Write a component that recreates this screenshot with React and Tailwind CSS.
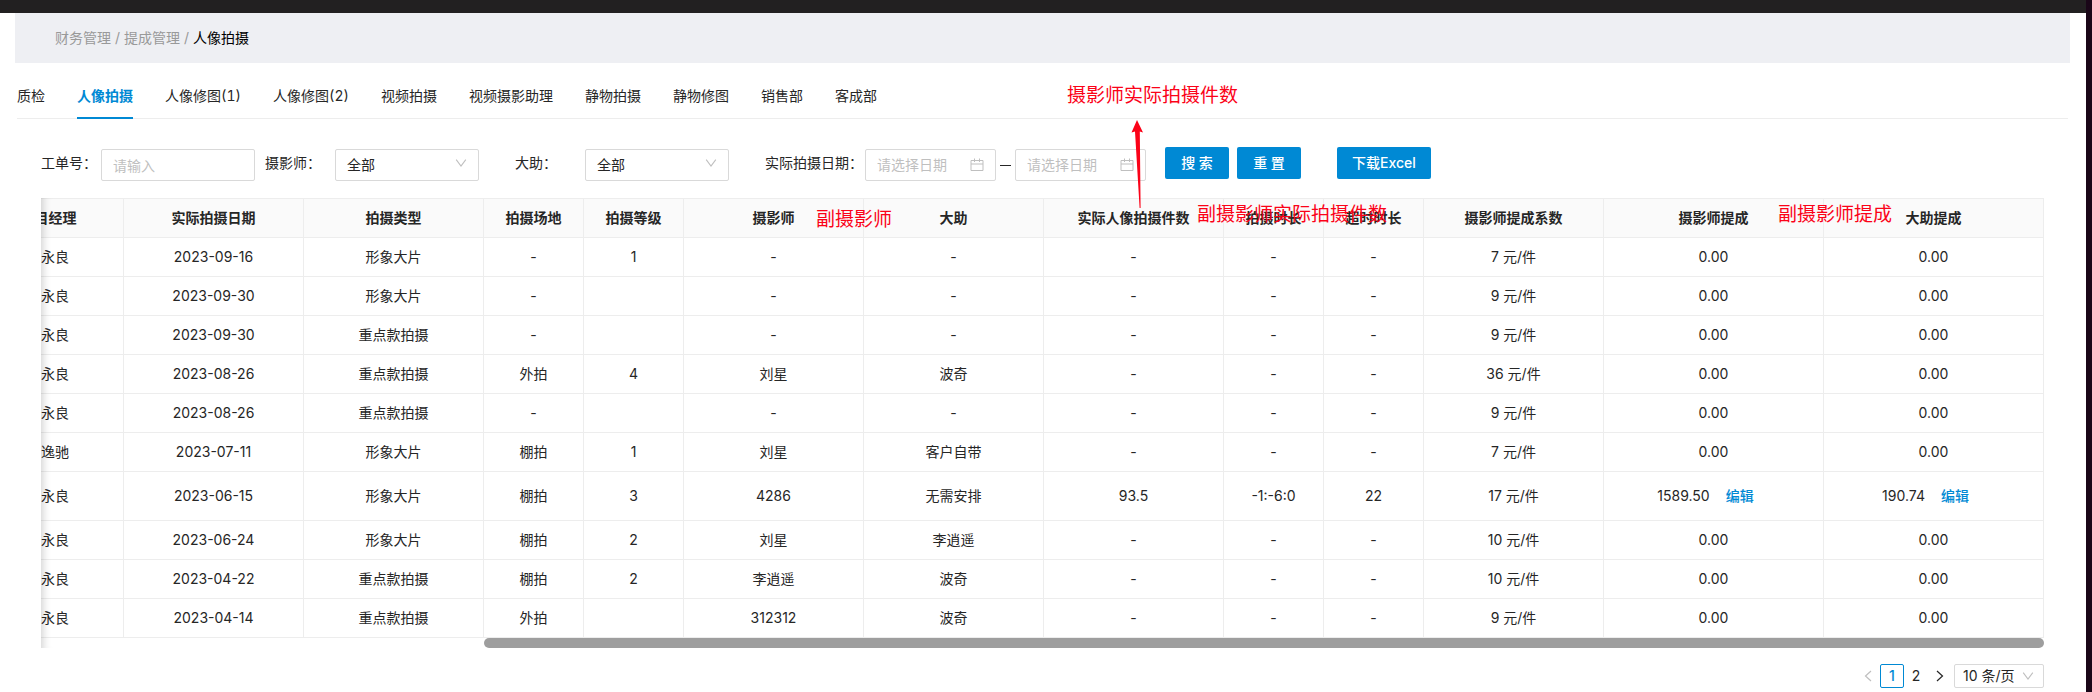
import React from 'react';

const tabs = ['质检', '人像拍摄', '人像修图(1)', '人像修图(2)', '视频拍摄', '视频摄影助理', '静物拍摄', '静物修图', '销售部', '客成部'];

const columns = [
  ['项目经理', 150], ['实际拍摄日期', 180], ['拍摄类型', 180], ['拍摄场地', 100], ['拍摄等级', 100],
  ['摄影师', 180], ['大助', 180], ['实际人像拍摄件数', 180], ['拍摄时长', 100], ['超时时长', 100],
  ['摄影师提成系数', 180], ['摄影师提成', 220], ['大助提成', 220],
];

const rows = [
  ['永良', '2023-09-16', '形象大片', '-', '1', '-', '-', '-', '-', '-', '7 元/件', '0.00', '0.00'],
  ['永良', '2023-09-30', '形象大片', '-', '', '-', '-', '-', '-', '-', '9 元/件', '0.00', '0.00'],
  ['永良', '2023-09-30', '重点款拍摄', '-', '', '-', '-', '-', '-', '-', '9 元/件', '0.00', '0.00'],
  ['永良', '2023-08-26', '重点款拍摄', '外拍', '4', '刘星', '波奇', '-', '-', '-', '36 元/件', '0.00', '0.00'],
  ['永良', '2023-08-26', '重点款拍摄', '-', '', '-', '-', '-', '-', '-', '9 元/件', '0.00', '0.00'],
  ['逸驰', '2023-07-11', '形象大片', '棚拍', '1', '刘星', '客户自带', '-', '-', '-', '7 元/件', '0.00', '0.00'],
  ['永良', '2023-06-15', '形象大片', '棚拍', '3', '4286', '无需安排', '93.5', '-1:-6:0', '22', '17 元/件', '1589.50', '190.74'],
  ['永良', '2023-06-24', '形象大片', '棚拍', '2', '刘星', '李逍遥', '-', '-', '-', '10 元/件', '0.00', '0.00'],
  ['永良', '2023-04-22', '重点款拍摄', '棚拍', '2', '李逍遥', '波奇', '-', '-', '-', '10 元/件', '0.00', '0.00'],
  ['永良', '2023-04-14', '重点款拍摄', '外拍', '', '312312', '波奇', '-', '-', '-', '9 元/件', '0.00', '0.00'],
];

function Chevron({ className }) {
  return (
    <svg viewBox="0 0 12 8" className={className} fill="none" stroke="#bfbfbf" strokeWidth="1.1" aria-hidden="true">
      <path d="M1.2 0.6 6 7 10.8 0.6" />
    </svg>
  );
}

function CalendarIcon() {
  return (
    <svg viewBox="0 0 14 14" className="size-3.5 shrink-0" fill="none" stroke="#bfbfbf" aria-hidden="true">
      <path d="M1 2.5h12v10H1zM1 6h12M4.5 0.5v3.5M9.5 0.5v3.5" />
    </svg>
  );
}

function SelectField({ id, label }) {
  return (
    <div className="flex items-start">
      <label htmlFor={id} className="w-[70px] leading-8">{label}</label>
      <div className="relative mt-0.5">
        <select id={id} className="h-8 w-36 appearance-none rounded-xs border border-[#d9d9d9] bg-white pl-[11px] pr-8">
          <option>全部</option>
        </select>
        <Chevron className="pointer-events-none absolute right-3 top-2.5 h-2 w-3" />
      </div>
    </div>
  );
}

function DateBox({ id, label }) {
  return (
    <div className="mt-0.5 flex h-8 w-[131px] items-center rounded-xs border border-[#d9d9d9] pl-[11px] pr-[11px]">
      <input id={id} aria-label={label} placeholder="请选择日期" className="w-0 min-w-0 flex-1 outline-none placeholder:text-[#bfbfbf]" />
      <CalendarIcon />
    </div>
  );
}

function PrimaryButton({ children }) {
  return (
    <button type="button" className="h-8 min-w-16 rounded-xs bg-[#0089d4] px-[15px] font-medium text-white">{children}</button>
  );
}

function Filters() {
  return (
    <form className="flex items-start px-6" onSubmit={(e) => e.preventDefault()}>
      <div className="mr-2.5 flex items-start">
        <label htmlFor="order" className="w-[60px] leading-8">工单号：</label>
        <input id="order" placeholder="请输入" className="mt-0.5 h-8 w-[154px] rounded-xs border border-[#d9d9d9] px-[11px] outline-none placeholder:text-[#bfbfbf]" />
      </div>
      <SelectField id="photographer" label="摄影师：" />
      <div className="ml-9 mr-9">
        <SelectField id="assistant" label="大助：" />
      </div>
      <label htmlFor="from" className="w-[100px] leading-8">实际拍摄日期：</label>
      <DateBox id="from" label="开始日期" />
      <span className="mx-1 mt-[18px] h-px w-[11px] bg-[#262626]" />
      <DateBox id="to" label="结束日期" />
      <div className="ml-[19px] flex gap-2">
        <PrimaryButton>搜 索</PrimaryButton>
        <PrimaryButton>重 置</PrimaryButton>
      </div>
      <div className="ml-9">
        <PrimaryButton>下载Excel</PrimaryButton>
      </div>
    </form>
  );
}

function CommissionTable() {
  return (
    <div className="relative mx-6 mt-[17px] overflow-hidden">
      <table className="-ml-[67px] w-[calc(100%+67px)] table-fixed border-separate border-spacing-0 text-center leading-[22px]">
        <colgroup>
          {columns.map(([name, width]) => <col key={name} style={{ width }} />)}
        </colgroup>
        <thead>
          <tr>
            {columns.map(([name]) => (
              <th key={name} className="border-y border-r border-[#ededed] bg-[#fafafa] py-2 font-bold">{name}</th>
            ))}
          </tr>
        </thead>
        <tbody>
          {rows.map((row, r) => (
            <tr key={r}>
              {row.map((cell, c) => (
                <td key={c} className={`border-b border-r border-[#ededed] py-2 ${c === 0 ? 'pl-[67px] text-left' : ''}`}>
                  {cell}
                  {c > 10 && cell !== '0.00' && (
                    <button type="button" className="h-8 px-4 font-medium text-[#0089d4]">编辑</button>
                  )}
                </td>
              ))}
            </tr>
          ))}
        </tbody>
      </table>
      <div className="flex h-2.5 justify-end">
        <div className="w-[calc(100%-443px)] rounded-full bg-[#9e9e9e]" />
      </div>
      <div className="pointer-events-none absolute inset-y-0 left-0 w-8 shadow-[inset_10px_0_8px_-8px_rgba(0,0,0,0.18)]" />
    </div>
  );
}

function Pagination() {
  return (
    <nav className="mx-6 mt-4 flex items-center justify-end leading-[22px]" aria-label="分页">
      <button type="button" aria-label="上一页" className="grid size-6 place-items-center">
        <svg viewBox="0 0 8 12" className="h-3 w-2" fill="none" stroke="#bfbfbf" strokeWidth="1.2"><path d="M7 1 1.5 6 7 11" /></svg>
      </button>
      <button type="button" className="size-6 rounded-xs border border-[#0089d4] font-medium text-[#0089d4]">1</button>
      <button type="button" className="size-6">2</button>
      <button type="button" aria-label="下一页" className="grid size-6 place-items-center">
        <svg viewBox="0 0 8 12" className="h-3 w-2" fill="none" stroke="#262626" strokeWidth="1.2"><path d="M1 1 6.500 6 1 11" /></svg>
      </button>
      <div className="relative ml-0.5">
        <select aria-label="每页条数" className="h-6 w-[90px] appearance-none rounded-xs border border-[#d9d9d9] bg-white pl-2 leading-[22px]">
          <option>10 条/页</option>
        </select>
        <Chevron className="pointer-events-none absolute right-2.5 top-2 h-2 w-3" />
      </div>
    </nav>
  );
}

function Annotations() {
  const note = 'absolute whitespace-nowrap text-[19px] leading-6 text-[#fb0218]';
  return (
    <div className="pointer-events-none absolute inset-0">
      <span className={`${note} left-[1067px] top-[84px]`}>摄影师实际拍摄件数</span>
      <span className={`${note} left-[816px] top-[208px]`}>副摄影师</span>
      <span className={`${note} left-[1197px] top-[203px]`}>副摄影师实际拍摄件数</span>
      <span className={`${note} left-[1778px] top-[203px]`}>副摄影师提成</span>
      <svg viewBox="0 0 12 88" className="absolute left-[1131px] top-[120px] h-[88px] w-3" fill="#fb0218" aria-hidden="true">
        <path d="M6 0 12 12.500 8.800 11.500 9.600 88 8.600 88 4 11.500 0.500 12.500Z" />
      </svg>
    </div>
  );
}

export default function App() {
  return (
    <div className="relative flex min-h-screen overflow-hidden bg-white font-['Inter','Noto_Sans_CJK_SC',sans-serif] text-sm text-[#262626]">
      <main className="min-w-0 flex-1">
        <div className="h-[13px] bg-[#222021]" />
        <nav className="ml-[15px] mr-4 flex h-[50px] items-center gap-1 bg-[#eeeff3] px-10 text-[#999]" aria-label="面包屑">
          <a href="#finance">财务管理</a>
          <span>/</span>
          <a href="#commission">提成管理</a>
          <span>/</span>
          <span className="text-black">人像拍摄</span>
        </nav>
        <div className="ml-[17px] mr-[18px]">
          <div className="mt-2.5 flex gap-8 border-b border-[#ededed] tabular-nums" role="tablist">
            {tabs.map((tab, i) => (
              <button
                key={tab}
                type="button"
                role="tab"
                aria-selected={i === 1}
                className={`-mb-px border-b-2 pb-2.5 pt-3 leading-[22px] ${i === 1 ? 'border-[#0089d4] font-bold text-[#0089d4]' : 'border-transparent'}`}
              >
                {tab}
              </button>
            ))}
          </div>
          <div className="mt-7">
            <Filters />
          </div>
          <CommissionTable />
          <Pagination />
        </div>
      </main>
      <div className="w-1.5 shrink-0 bg-[#1a0618]" />
      <Annotations />
    </div>
  );
}
